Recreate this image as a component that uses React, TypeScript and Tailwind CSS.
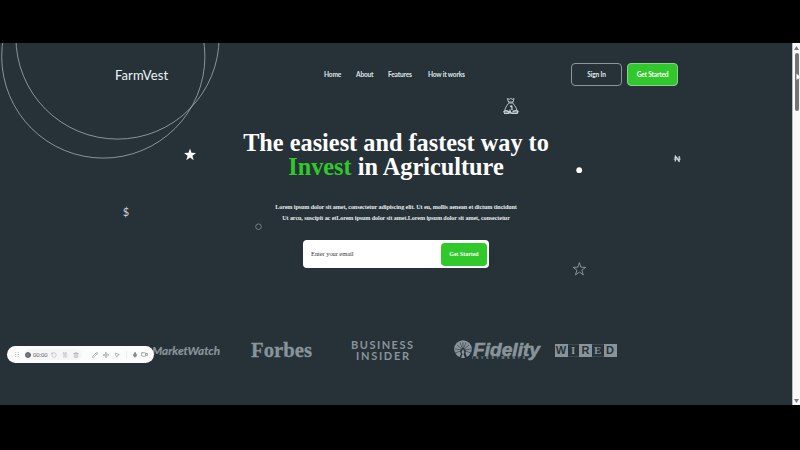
import React from "react";
import { Circle, MousePointer2, Move, Mic, Pencil, Pause, RotateCcw, Trash2, Video } from "lucide-react";

const navItems = [
  { label: "Home", width: "w-[32px]" },
  { label: "About", width: "w-[32px]" },
  { label: "Features", width: "w-[40px]" },
  { label: "How it works", width: "w-[38px]" },
];

function Header() {
  return (
    <header className="flex h-[63px] items-center pl-[115px]">
      <div className="w-[209px] pt-[3px] text-[13px] tracking-[0.1px] text-[#eef3f6]">FarmVest</div>
      <nav className="flex w-[247px] pt-px text-[6.6px] font-bold tracking-[-0.18px] whitespace-nowrap text-[#dfe6e9]">
        {navItems.map((n) => (
          <a key={n.label} className={n.width}>
            {n.label}
          </a>
        ))}
      </nav>
      <div className="flex gap-[5px] text-[6.6px] font-bold tracking-[-0.18px] text-white">
        <button className="h-[23px] w-[51px] rounded-[4px] border border-[#8b959b] text-[#dfe6e9]">Sign In</button>
        <button className="h-[23px] w-[51px] rounded-[4px] border border-[#8fce92] bg-[#30c82b]">Get Started</button>
      </div>
    </header>
  );
}

function Hero() {
  return (
    <section className="flex h-[206px] w-[792px] flex-col items-center pt-[25px] font-['Liberation_Serif',serif]">
      <h1 className="text-center text-[24.3px] leading-[24px] font-bold text-white">
        The easiest and fastest way to
        <br />
        <span className="text-[#30c82b]">Invest</span> in Agriculture
      </h1>
      <p className="mt-[23px] text-center text-[6.15px] leading-[11px] font-bold tracking-[-0.1px] whitespace-nowrap text-[#e4eaed]">
        Lorem ipsum dolor sit amet, consectetur adipiscing elit. Ut eu, mollis aenean et dictum tincidunt
        <br />
        Ut arcu, suscipit ac etLorem ipsum dolor sit amet.Lorem ipsum dolor sit amet, consectetur
      </p>
      <form className="mt-[16px] flex h-[28px] w-[186px] shrink-0 items-center justify-between rounded-[4px] bg-white pr-[2px] pl-[8px] text-[6.5px]">
        <span className="tracking-[-0.08px] text-[#37383b]">Enter your email</span>
        <button type="button" className="h-[23px] w-[46px] rounded-[4px] bg-[#30c82b] text-[5.9px] font-bold text-white">
          Get Started
        </button>
      </form>
    </section>
  );
}

function Fidelity() {
  return (
    <svg className="mt-px h-[24px] w-[88px]" viewBox="0 0 88 24" fill="#89949a">
      <circle cx="9" cy="10" r="8.8" />
      <g stroke="#263238" strokeWidth="0.6">
        <path d="M9 11L1 14M9 11L1 10M9 11L3 6M9 11L6 3.5M9 11V3M9 11L12 3.5M9 11L15 6M9 11L17 10M9 11L17 14" />
      </g>
      <path d="M9 8.5L12 12L11.5 14L13.5 20H4.5L7 15L6 12Z" fill="#263238" />
      <path d="M9 10L10.5 13L9.5 15L11 19H7L8.5 15L7.5 13Z" />
      <text x="19" y="16.6" textLength="67" lengthAdjust="spacingAndGlyphs" fontFamily="Liberation Sans, sans-serif" fontSize="18" fontWeight="bold" fontStyle="italic" stroke="#89949a" strokeWidth="0.6">Fidelity</text>
      <text x="18" y="19.9" textLength="53" fontFamily="Liberation Sans, sans-serif" fontSize="3.5" fontWeight="bold">INVESTMENTS</text>
    </svg>
  );
}

const wired = [
  { c: "W", boxed: true },
  { c: "I", boxed: false },
  { c: "R", boxed: true },
  { c: "E", boxed: false },
  { c: "D", boxed: true },
];

function Logos() {
  return (
    <section className="flex h-[93px] items-start pt-[26px] pl-[153px] text-[#89949a]">
      <svg className="mt-[2px] h-[20px] w-[98px]" viewBox="0 0 98 20" fill="#89949a">
        <text x="-1" y="15" textLength="68" lengthAdjust="spacingAndGlyphs" fontFamily="Lato, sans-serif" fontSize="11.8" fontWeight="bold" fontStyle="italic" stroke="#89949a" strokeWidth="0.2">MarketWatch</text>
      </svg>
      <svg className="h-[24px] w-[98px]" viewBox="0 0 98 24" fill="#89949a">
        <text x="0" y="19" textLength="61" lengthAdjust="spacingAndGlyphs" fontFamily="Liberation Serif, serif" fontSize="22" fontWeight="bold" stroke="#89949a" strokeWidth="0.3">Forbes</text>
      </svg>
      <svg className="h-[24px] w-[105px]" viewBox="0 0 105 24" fill="#89949a">
        <text x="2" y="10.5" textLength="62" fontFamily="Lato, sans-serif" fontSize="11" fontWeight="bold">BUSINESS</text>
        <text x="7" y="21.5" textLength="53" fontFamily="Lato, sans-serif" fontSize="11" fontWeight="bold">INSIDER</text>
      </svg>
      <Fidelity />
      <div className="mt-[6px] ml-[12.5px] flex text-[11px] leading-[12px] font-bold">
        {wired.map(({ c, boxed }) => (
          <span
            key={c}
            className={
              boxed
                ? "h-[13px] w-[13px] bg-[#89949a] text-center font-['Liberation_Sans',sans-serif] leading-[13px] text-[#263238]"
                : "h-[13px] w-[11.5px] border-y border-[#3b484e] text-center font-['Liberation_Serif',serif] leading-[11px]"
            }
          >
            {c}
          </span>
        ))}
      </div>
    </section>
  );
}

function Decorations() {
  return (
    <svg className="pointer-events-none absolute inset-0 h-[362px] w-[792px]" viewBox="0 43 792 362" fill="none">
      <g stroke="#aab4b9" strokeWidth="0.75">
        <circle cx="103.3" cy="56.5" r="101.6" />
        <circle cx="117.5" cy="37.5" r="101.6" />
      </g>
      <path d="M190 148.5L191.5 152.8L196 152.9L192.4 155.7L193.7 160.2L190 157.6L186.3 160.2L187.6 155.7L184 152.9L188.5 152.8Z" fill="#fff" />
      <path d="M579.4 262.6L580.9 267.2L585.7 267.3L581.9 270.2L583.3 274.9L579.4 272.1L575.5 274.9L576.9 270.2L573.1 267.3L577.9 267.2Z" stroke="#9da7ac" strokeWidth="0.8" />
      <circle cx="579.2" cy="170.2" r="2.9" fill="#fff" />
      <circle cx="258.5" cy="226.7" r="2.8" stroke="#7c878d" strokeWidth="0.9" />
      <text x="122.8" y="216.3" fontFamily="Lato, sans-serif" fontSize="11" fill="#cbd3d7">$</text>
      <g stroke="#d4dbdf" strokeLinejoin="round">
        <path d="M675.3 161.6V155.9L679.2 161.6V155.9" strokeWidth="1.1" />
        <path d="M673.8 158H680.7M673.8 159.6H680.7" strokeWidth="0.6" />
      </g>
      <g stroke="#c8d1d6" strokeWidth="0.9" strokeLinejoin="round">
        <path d="M507.4 98.5L508.5 102H513L514 98.5L512.4 99.3L510.8 98.5L509.2 99.3ZM508 103H513.6M508.5 103.5C506.5 106 505 108 504.8 111M513 103.5C515 106 516.7 108 517 111" />
        <path d="M503.5 112.4C505 110 507 110.5 508.5 111.7H511M504 113.3H508L510 112.5L512 113.3H517L518 111.5C516 109.7 514.5 111.4 512.5 111.5" strokeWidth="1.5" />
        <path d="M510 106.5L511.8 106L512 110M510 109.5V111" strokeWidth="1.3" />
      </g>
    </svg>
  );
}

function Recorder() {
  return (
    <div className="absolute top-[303px] left-[7px] flex h-[17px] w-[147px] items-center rounded-full bg-[#fcfcfd] pl-[8px] text-[#77797c]">
      <svg className="mr-[5px] h-[5px] w-[4px]" viewBox="0 0 4 6" fill="#a0a2a5">
        <path d="M0 0h1v1H0zM3 0h1v1H3zM0 2.5h1v1H0zM3 2.5h1v1H3zM0 5h1v1H0zM3 5h1v1H3z" />
      </svg>
      <div className="mr-[10px] flex h-[11px] w-[58px] items-center rounded-full bg-[#f5f6f8] pl-px">
        <Circle size={6} fill="#77797c" strokeWidth={3} className="mr-[2px] shrink-0 text-[#4c4e51]" />
        <span className="w-[18px] shrink-0 text-[5.6px] leading-none text-[#55575a]">00:00</span>
        <RotateCcw size={6} className="mr-[5px] shrink-0 text-[#a5a7aa]" />
        <Pause size={6} className="mr-[5px] shrink-0 text-[#b5b7ba]" />
        <Trash2 size={6} className="shrink-0 text-[#9a9c9f]" />
      </div>
      <Pencil size={6} className="mr-[5px]" />
      <Move size={6} className="mr-[5px]" />
      <MousePointer2 size={6} className="mr-[6px]" />
      <span className="mr-[5px] h-[8px] w-px bg-[#f0f0f1]" />
      <Mic size={6} fill="#8b8d90" className="mr-[3px]" />
      <Video size={7} />
    </div>
  );
}

function Scrollbar() {
  return (
    <div className="flex w-[8px] flex-col items-center justify-between border-l border-[#b8bcc0] bg-[#f9f9fa] pt-[3px] pb-[2px]">
      <div className="flex flex-col items-center">
        <svg className="h-[4px] w-[5px]" viewBox="0 0 5 4" fill="#7c7d80">
          <path d="M2.5 0L5 4H0Z" />
        </svg>
        <div className="mt-[3px] h-[58px] w-[4px] rounded-full bg-[#737477]" />
      </div>
      <svg className="h-[4px] w-[5px]" viewBox="0 0 5 4" fill="#7c7d80">
        <path d="M2.5 4L5 0H0Z" />
      </svg>
    </div>
  );
}

export default function App() {
  return (
    <div className="h-[450px] w-[800px] overflow-hidden bg-black py-[43px] font-[Lato,sans-serif]">
      <div className="relative flex h-[362px] overflow-hidden bg-[#263238]">
        <main className="w-[792px] shrink-0">
          <Header />
          <Hero />
          <Logos />
        </main>
        <Scrollbar />
        <Decorations />
        <Recorder />
        <svg className="absolute top-[30px] left-[796px] h-[8px] w-[4px]" viewBox="0 0 4 8">
          <path d="M.4 .5V7L2 5.8L4 6V3.5Z" fill="#fff" stroke="#999" strokeWidth=".3" />
        </svg>
      </div>
    </div>
  );
}
